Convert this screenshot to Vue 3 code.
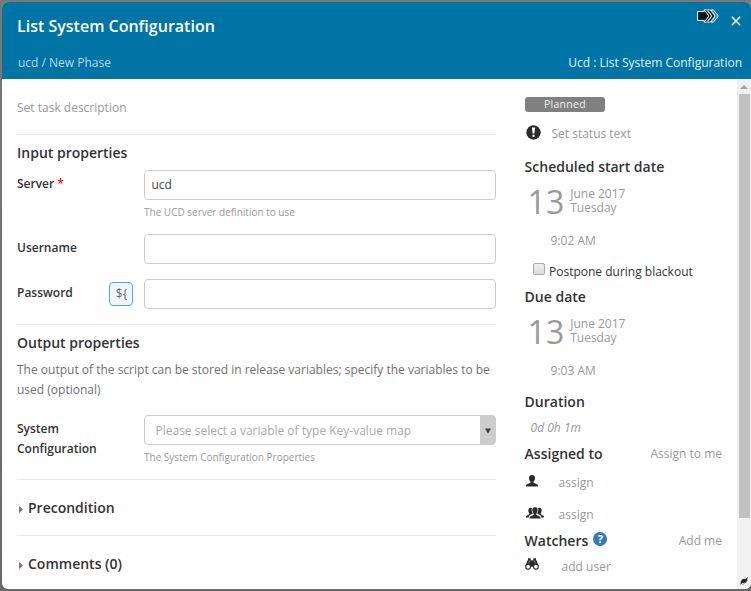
<script setup>
import { ref } from 'vue'

const server = ref('ucd')
const username = ref('')
const password = ref('')
const postpone = ref(false)
const dates = [
  { title: 'Scheduled start date', day: '13', month: 'June 2017', weekday: 'Tuesday', time: '9:02 AM', blackout: true },
  { title: 'Due date', day: '13', month: 'June 2017', weekday: 'Tuesday', time: '9:03 AM', blackout: false },
]
const panels = ['Precondition', 'Comments (0)']
</script>

<template>
  <div class="backdrop">
    <div class="modal">
      <header class="header">
        <div class="header-top">
          <h1>List System Configuration</h1>
          <svg class="arrows" width="22" height="14" viewBox="0 0 22 14">
            <path d="M14 .8h2.500L21.300 7l-4.800 6.200H14L18 7z" fill="#2493d2" stroke="#fff" stroke-width=".8" />
            <path d="M10.500 .8h2.500L18 7l-5 6.200h-2.500L15 7z" fill="#171717" stroke="#fff" stroke-width=".8" />
            <path d="M7 .8h2.500L14.800 7l-5.300 6.200H7L12 7z" fill="#171717" stroke="#fff" stroke-width=".8" />
            <path d="M.5 2.600h6.700V1L12 7l-4.800 6v-1.600H.5z" fill="#171717" stroke="#fff" stroke-width=".9" />
          </svg>
          <svg class="close" width="10" height="10" viewBox="0 0 10 10">
            <path d="M.8 .8l8.400 8.400M9.200 .8L.8 9.200" stroke="#fff" stroke-width="1.500" />
          </svg>
        </div>
        <div class="header-bottom">
          <span class="crumb">ucd / New Phase</span>
          <span class="kind">Ucd : List System Configuration</span>
        </div>
      </header>

      <div class="body">
        <main class="main">
          <div class="description">Set task description</div>

          <section class="inputs">
            <h2>Input properties</h2>
            <div class="field server">
              <label>Server <span class="required">*</span></label>
              <div class="control">
                <input v-model="server" type="text">
                <p class="help">The UCD server definition to use</p>
              </div>
            </div>
            <div class="field username">
              <label>Username</label>
              <div class="control"><input v-model="username" type="text"></div>
            </div>
            <div class="field">
              <label>Password</label>
              <button class="variable">${</button>
              <div class="control"><input v-model="password" type="password"></div>
            </div>
          </section>

          <section class="outputs">
            <h2>Output properties</h2>
            <p class="intro">The output of the script can be stored in release variables; specify the variables to be used (optional)</p>
            <div class="field">
              <label>System<br>Configuration</label>
              <div class="control">
                <div class="select">
                  <span>Please select a variable of type Key-value map</span>
                  <i><svg width="6" height="6" viewBox="0 0 6 6"><path d="M0 .5h6L3 5.800z" fill="#444" /></svg></i>
                </div>
                <p class="help">The System Configuration Properties</p>
              </div>
            </div>
          </section>

          <section v-for="panel in panels" :key="panel" class="panel">
            <svg width="4" height="7" viewBox="0 0 4 7"><path d="M0 0l4 3.500L0 7z" fill="#777" /></svg>
            <h2>{{ panel }}</h2>
          </section>
        </main>

        <aside class="side">
          <div class="badge">Planned</div>
          <div class="status">
            <svg width="15" height="15" viewBox="0 0 15 15">
              <circle cx="7.500" cy="7.500" r="7.200" fill="#2b2b2b" />
              <path d="M5.900 2.500h3.200l-.7 6H6.600zM6.500 9.800h2v2.300h-2z" fill="#fff" />
            </svg>
            <span>Set status text</span>
          </div>

          <div v-for="date in dates" :key="date.title" class="date">
            <h2>{{ date.title }}</h2>
            <div class="calendar">
              <span class="day">{{ date.day }}</span>
              <div class="month"><div>{{ date.month }}</div><div>{{ date.weekday }}</div></div>
            </div>
            <div class="time">{{ date.time }}</div>
            <label v-if="date.blackout" class="postpone">
              <input v-model="postpone" type="checkbox"><span>Postpone during blackout</span>
            </label>
          </div>

          <h2 class="duration-title">Duration</h2>
          <div class="duration">0d 0h 1m</div>

          <div class="heading assigned"><h2>Assigned to</h2><a>Assign to me</a></div>
          <div class="person">
            <svg width="12" height="12" viewBox="0 0 12 12">
              <path d="M6 0c2 0 3 1.300 3 3.100C9 4.700 8.300 6 7.500 6.800v1L11 9.300c.7.400 1 .8 1 2.200H0c0-1.400.3-1.800 1-2.200l3.500-1.500v-1C3.700 6 3 4.700 3 3.100 3 1.300 4 0 6 0z" fill="#2b2b2b" />
            </svg>
            <span>assign</span>
          </div>
          <div class="person team">
            <svg width="18" height="12" viewBox="0 0 18 12">
              <path d="M4.500 .8c.7 0 1.200.2 1.500.6-.5 1.800-.1 3.800.9 5.100L3.800 8.300c-.7.400-1 1-1.100 2.200H0c0-1.500.3-1.700.9-2l2.400-1.200v-.8C1.800 4.700 2 .8 4.500 .8zM13.500 .8c-.7 0-1.200.2-1.500.6.500 1.800.1 3.800-.9 5.100l3.100 1.800c.7.400 1 1 1.100 2.200H18c0-1.500-.3-1.700-.9-2l-2.400-1.200v-.8c1.500-1.800 1.300-5.700-1.200-5.700z" fill="#2b2b2b" />
              <path d="M9 0c1.900 0 2.900 1.300 2.900 3.200 0 1.600-.7 2.800-1.400 3.600v1l3.200 1.500c.7.400 1 .8 1 2.400H3.300c0-1.600.3-2 1-2.400l3.200-1.500v-1C6.800 6 6.100 4.800 6.100 3.200 6.100 1.300 7.100 0 9 0z" fill="#2b2b2b" stroke="#fff" stroke-width=".4" />
            </svg>
            <span>assign</span>
          </div>

          <div class="heading watchers">
            <h2>Watchers</h2>
            <span class="question">?</span>
            <a>Add me</a>
          </div>
          <div class="person watcher">
            <svg width="14" height="12" viewBox="0 0 14 12">
              <path d="M3 .3h2.600v1.200L6.500 2.500h1l.9-1V.3H11v1.200l2.600 6H.4L3 1.500z" fill="#2b2b2b" />
              <path d="M5 2L3.700 5.500M9 2l1.300 3.500" stroke="#fff" stroke-width=".4" />
              <circle cx="3.100" cy="8.700" r="2.400" fill="#fff" stroke="#2b2b2b" stroke-width="1.100" />
              <circle cx="10.900" cy="8.700" r="2.400" fill="#fff" stroke="#2b2b2b" stroke-width="1.100" />
              <path d="M5.600 5.500h2.800v3.200H5.600z" fill="#2b2b2b" />
            </svg>
            <span>add user</span>
          </div>
        </aside>

        <div class="scrollbar">
          <svg class="up" width="8" height="4" viewBox="0 0 8 4"><path d="M0 4l4-4 4 4z" fill="#a0a0a0" /></svg>
          <div class="thumb"></div>
          <svg class="grip" width="8" height="8" viewBox="0 0 8 8">
            <path d="M2 2.300L5.500 2 8 0 6.200 5.500 2.500 6 0 8z" fill="#222" />
            <path d="M0 5.500L5.500 0M2.500 8L8 2.500" stroke="#222" stroke-width=".8" stroke-dasharray="1 1" />
          </svg>
        </div>
      </div>
    </div>
  </div>
</template>

<style>
body {
  margin: 0;
  overflow: hidden;
}
</style>

<style scoped>
* {
  box-sizing: border-box;
}

.backdrop {
  width: 751px;
  height: 591px;
  padding: 2px 0 2px 2px;
  background: linear-gradient(#7b7878, #6a6868);
  font: 12px/20px "Open Sans", sans-serif;
  color: #333;
}

.modal {
  display: flex;
  flex-direction: column;
  height: 587px;
  overflow: hidden;
  border-radius: 6px;
  background: #fff;
}

h1, h2, p {
  margin: 0;
}

h2 {
  font-size: 14px;
  line-height: 20px;
  font-weight: 600;
}

svg {
  display: block;
  flex: none;
}

.header {
  height: 77px;
  flex: none;
  background: #0074a4;
  color: #fff;
}

.header-top {
  display: flex;
  align-items: flex-start;
  height: 51px;
  padding: 0 10px 0 15px;
}

h1 {
  flex: 1;
  padding-top: 14px;
  font-size: 16px;
  line-height: 20px;
  font-weight: 600;
}

.arrows {
  margin-top: 7px;
}

.close {
  margin: 14px 0 0 12px;
}

.header-bottom {
  display: flex;
  justify-content: space-between;
  padding: 0 9px 0 16px;
}

.crumb {
  color: #b9d7e5;
}

.kind {
  color: #e3f0f5;
}

.body {
  display: flex;
  flex: 1;
  min-height: 0;
}

.main {
  width: 479px;
  margin: 0 28.600px 0 15px;
}

.description {
  height: 55px;
  padding-top: 19px;
  color: #999;
}

section {
  border-top: 1px solid #e8e8e8;
}

.inputs {
  height: 190px;
  padding-top: 8px;
}

.outputs {
  height: 155px;
  padding-top: 8px;
}

.field {
  display: flex;
}

.field label {
  flex: 1;
  padding-top: 4px;
  font-weight: 600;
}

.server {
  height: 64px;
  margin-top: 7px;
}

.username {
  height: 45px;
}

.required {
  color: #f00;
}

.control {
  width: 352px;
}

.control input, .select {
  display: block;
  width: 100%;
  height: 30px;
  border: 1px solid #ccc;
  border-radius: 4px;
  background: #fff;
  font: inherit;
  color: #444;
}

.control input {
  padding: 0 6.500px 2px;
  outline: none;
}

.help {
  padding-top: 2px;
  font-size: 10px;
  color: #999;
}

.variable {
  width: 24px;
  height: 24px;
  margin: 3px 11px 0 0;
  padding: 0 0 0 1px;
  border: 1px solid #4cafdb;
  border-radius: 4px;
  background: #eff7fc;
  font: inherit;
  color: #666;
}

.intro {
  padding-top: 7px;
  color: #707070;
}

.outputs .field {
  margin-top: 15px;
}

.select {
  display: flex;
  align-items: center;
  justify-content: space-between;
  padding-left: 10.500px;
  color: #aaa;
}

.select span {
  padding-top: 2px;
}

.select i {
  display: flex;
  align-items: center;
  justify-content: center;
  width: 15px;
  height: 28px;
  background: #ccc;
}

.select i svg {
  margin-top: 2px;
}

.panel {
  display: flex;
  align-items: center;
  gap: 5px;
  height: 56px;
  padding-left: 2px;
}

.panel svg {
  margin-top: 3px;
}

.side {
  width: 197.400px;
  margin-right: 15px;
  padding-top: 18px;
}

.badge {
  width: 80px;
  height: 15px;
  margin-left: .4px;
  border-radius: 3px;
  background: #808080;
  color: #eee;
  font-size: 10.500px;
  line-height: 14px;
  letter-spacing: .3px;
  text-align: center;
}

.status {
  display: flex;
  gap: 10.500px;
  height: 45px;
  padding: 12px 0 0 1.400px;
  color: #999;
}

.status svg {
  margin-top: 1px;
}

.date {
  height: 105px;
}

.date:has(.postpone) {
  height: 130px;
}

.calendar {
  display: flex;
  gap: 6px;
  height: 54px;
  padding: 9px 0 0 3px;
  color: #999;
}

.day {
  font-size: 32px;
  line-height: 32px;
}

.month {
  padding-top: 1px;
  line-height: 14px;
}

.time {
  padding-left: 26px;
  color: #999;
}

.postpone {
  display: flex;
  gap: 4px;
  padding: 11px 0 0 8.400px;
}

.postpone input {
  appearance: none;
  width: 12px;
  height: 12px;
  margin: 1px 0 0;
  border: 1px solid #aaa;
  border-radius: 2px;
  background: linear-gradient(#eee, #ddd);
}

.duration-title {
  height: 25px;
}

.duration {
  height: 27px;
  padding: 1px 0 0 6px;
  font-style: italic;
  color: #999;
}

.heading {
  display: flex;
}

.heading a {
  margin-left: auto;
  color: #999;
}

.person {
  display: flex;
  height: 32px;
  padding: 9px 0 0 1px;
  color: #999;
}

.person svg {
  margin: 2px 21px 0 0;
}

.team {
  height: 35px;
}

.team svg {
  margin-right: 15px;
}

.question {
  width: 14px;
  height: 14px;
  margin: 1px 0 0 5px;
  border-radius: 50%;
  background: #337ab7;
  color: #fff;
  font-weight: 700;
  font-size: 11px;
  line-height: 14px;
  text-align: center;
}

.watcher {
  padding: 6px 0 0;
}

.watcher svg {
  margin: 1px 23px 0 0;
}

.scrollbar {
  display: flex;
  flex-direction: column;
  align-items: center;
  width: 14px;
  padding-top: 6px;
  background: #f1f1f1;
}

.thumb {
  width: 11px;
  height: 424px;
  margin: 5px 0 0 1px;
  background: #c1c1c1;
}

.grip {
  margin: auto 0 4px;
}
</style>
